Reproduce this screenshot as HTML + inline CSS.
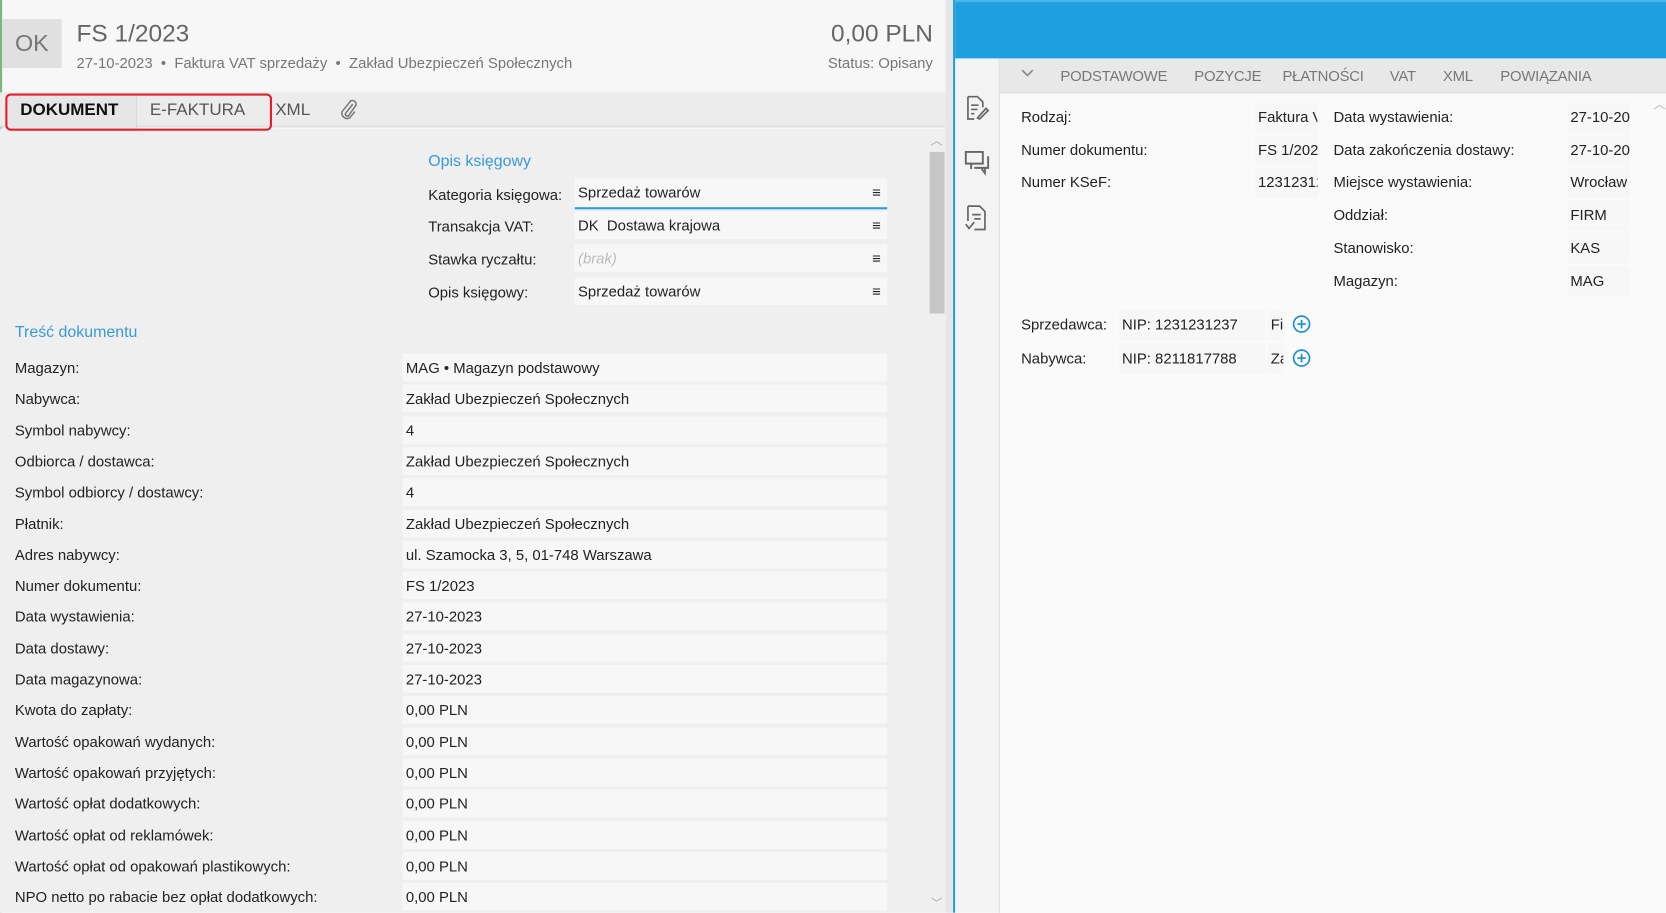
<!DOCTYPE html>
<html><head><meta charset="utf-8"><style>
*{box-sizing:border-box;margin:0;padding:0}
html,body{width:1666px;height:912px;overflow:hidden;background:#fafafa;font-family:"Liberation Sans",sans-serif}
#s{position:absolute;left:0;top:0;width:1568px;height:859px;transform:scale(1.0625);transform-origin:0 0}
.a{position:absolute;white-space:nowrap}
.lbl{font-size:14px;color:#222}
.fld{position:absolute;background:#f7f7f7;font-size:14px;color:#222;padding-left:3px;line-height:26px;height:26px;overflow:hidden;white-space:nowrap}
.ham{position:absolute;right:6px;top:0;font-size:14px}
.tab{position:absolute;top:63px;font-size:14px;color:#777;letter-spacing:-.2px}
</style></head><body><div id="s">
<div class="a" style="left:0;top:0;width:890px;height:87px;background:#f7f7f7"></div>
<div class="a" style="left:0;top:0;width:2px;height:859px;background:#7cb87c"></div>
<div class="a" style="left:2px;top:18px;width:56px;height:46px;background:#e0e0e0;color:#777;font-size:22px;line-height:46px;text-align:center">OK</div>
<div class="a" style="left:72px;top:18px;font-size:23px;color:#666">FS 1/2023</div>
<div class="a" style="left:72px;top:51px;font-size:14px;color:#777">27-10-2023 &nbsp;•&nbsp; Faktura VAT sprzedaży &nbsp;•&nbsp; Zakład Ubezpieczeń Społecznych</div>
<div class="a" style="right:690px;top:18px;font-size:23px;color:#666">0,00 PLN</div>
<div class="a" style="right:690px;top:51px;font-size:14px;color:#777">Status: Opisany</div>
<div class="a" style="left:0;top:87px;width:890px;height:33px;background:#ececec;border-bottom:2px solid #e0e0e0"></div>
<div class="a" style="left:0;top:121px;width:890px;height:738px;background:#efefef"></div>
<div class="a" style="left:7px;top:90px;width:122px;height:31px;background:#e6e6e6;border-right:1px solid #d8d8d8"></div>
<div class="a" style="left:19px;top:95px;font-size:16px;font-weight:bold;color:#111">DOKUMENT</div>
<div class="a" style="left:141px;top:95px;font-size:16px;color:#555">E-FAKTURA</div>
<div class="a" style="left:5px;top:88px;width:251px;height:35px;border:2px solid #e3202a;border-radius:5px"></div>
<div class="a" style="left:259px;top:95px;font-size:16px;color:#555">XML</div>
<svg class="a" style="left:318px;top:92px" width="20" height="22" viewBox="0 0 20 22"><path d="M14 6 L7 15 a2 2 0 0 0 3 2 L17 7 a3.5 3.5 0 0 0 -5 -4 L4 13 a5 5 0 0 0 7 6 L16 13" fill="none" stroke="#777" stroke-width="1.4"/></svg>
<div class="a" style="left:875px;top:143px;width:14px;height:152px;background:#c6c6c6"></div>
<div class="a" style="left:876px;top:124px;font-size:11px;color:#aaa">︿</div>
<div class="a" style="left:876px;top:842px;font-size:11px;color:#aaa">﹀</div>
<div class="a" style="left:890px;top:0;width:7px;height:859px;background:#e6e6e6"></div>
<div class="a" style="left:897px;top:0;width:2px;height:859px;background:#1ea0e0"></div>

<div class="a" style="left:403px;top:143px;font-size:15px;color:#3a9ad9">Opis księgowy</div>
<div class="a lbl" style="left:403px;top:175px">Kategoria księgowa:</div>
<div class="fld" style="left:541px;top:168px;width:294px;height:29px;border-bottom:2px solid #2a9ee0">Sprzedaż towarów<span class="ham">≡</span></div>
<div class="a lbl" style="left:403px;top:205px">Transakcja VAT:</div>
<div class="fld" style="left:541px;top:199px;width:294px">DK &nbsp;Dostawa krajowa<span class="ham">≡</span></div>
<div class="a lbl" style="left:403px;top:236px">Stawka ryczałtu:</div>
<div class="fld" style="left:541px;top:230px;width:294px;color:#bbb;font-style:italic">(brak)<span class="ham" style="color:#222;font-style:normal">≡</span></div>
<div class="a lbl" style="left:403px;top:267px">Opis księgowy:</div>
<div class="fld" style="left:541px;top:261px;width:294px">Sprzedaż towarów<span class="ham">≡</span></div>

<div class="a" style="left:14px;top:304px;font-size:15px;color:#3a9ad9">Treść dokumentu</div>
<div id="rows"></div>

<div class="a" style="left:899px;top:0;width:669px;height:55px;background:#1ea0e0;border-top:2px solid #4db4ea"></div>
<div class="a" style="left:899px;top:55px;width:42px;height:804px;background:#f3f3f3;border-right:1px solid #dcdcdc"></div>
<div class="a" style="left:941px;top:55px;width:627px;height:33px;background:#e8e8e8;border-bottom:1px solid #ddd"></div>
<svg class="a" style="left:960px;top:64px" width="14" height="10"><path d="M2 2 L7 7 L12 2" fill="none" stroke="#888" stroke-width="1.5"/></svg>
<div class="tab" style="left:998px">PODSTAWOWE</div>
<div class="tab" style="left:1124px">POZYCJE</div>
<div class="tab" style="left:1207px">PŁATNOŚCI</div>
<div class="tab" style="left:1308px">VAT</div>
<div class="tab" style="left:1358px">XML</div>
<div class="tab" style="left:1412px">POWIĄZANIA</div>
<svg class="a" style="left:908px;top:89px" width="24" height="26"><path d="M3 2 H12 L17 7 V12 M3 2 V23 H9 M6 10 H13 M6 14 H12 M6 18 H9 M12 22 L20 13 L22 15 L14 23 Z" fill="none" stroke="#666" stroke-width="1.6"/></svg>
<svg class="a" style="left:907px;top:140px" width="26" height="26"><path d="M2 3 H18 V14 H2 Z M7 14 V19 M10 18 H23 V7 M20 18 V23 L17 19" fill="none" stroke="#666" stroke-width="1.8"/></svg>
<svg class="a" style="left:907px;top:192px" width="24" height="27"><path d="M4 2 H15 L20 7 V24 H10 M4 2 V16 M8 10 H16 M10 14 H16 M2 19 L5 23 L10 17" fill="none" stroke="#666" stroke-width="1.6"/></svg>
<div class="a" style="left:1556px;top:89px;font-size:12px;color:#bbb">︿</div>
<div id="rr"></div>
</div>
<script>
var L=[["Magazyn:","MAG • Magazyn podstawowy"],["Nabywca:","Zakład Ubezpieczeń Społecznych"],["Symbol nabywcy:","4"],["Odbiorca / dostawca:","Zakład Ubezpieczeń Społecznych"],["Symbol odbiorcy / dostawcy:","4"],["Płatnik:","Zakład Ubezpieczeń Społecznych"],["Adres nabywcy:","ul. Szamocka 3, 5, 01-748 Warszawa"],["Numer dokumentu:","FS 1/2023"],["Data wystawienia:","27-10-2023"],["Data dostawy:","27-10-2023"],["Data magazynowa:","27-10-2023"],["Kwota do zapłaty:","0,00 PLN"],["Wartość opakowań wydanych:","0,00 PLN"],["Wartość opakowań przyjętych:","0,00 PLN"],["Wartość opłat dodatkowych:","0,00 PLN"],["Wartość opłat od reklamówek:","0,00 PLN"],["Wartość opłat od opakowań plastikowych:","0,00 PLN"],["NPO netto po rabacie bez opłat dodatkowych:","0,00 PLN"]];
var h="";L.forEach(function(r,i){var y=333+i*29.3;h+='<div class="a lbl" style="left:14px;top:'+(y+5)+'px">'+r[0]+'</div><div class="fld" style="left:379px;top:'+y+'px;width:456px">'+r[1]+'</div>';});
document.getElementById("rows").outerHTML=h;
var R=[[961,"Rodzaj:",1181,"Faktura VAT",110],[961,"Numer dokumentu:",1181,"FS 1/2023",141],[961,"Numer KSeF:",1181,"1231231237",171],[1255,"Data wystawienia:",1475,"27-10-2023",110],[1255,"Data zakończenia dostawy:",1475,"27-10-2023",141],[1255,"Miejsce wystawienia:",1475,"Wrocław",171],[1255,"Oddział:",1475,"FIRM",202],[1255,"Stanowisko:",1475,"KAS",233],[1255,"Magazyn:",1475,"MAG",264]];
h="";R.forEach(function(r){h+='<div class="a lbl" style="left:'+r[0]+'px;top:'+(r[4]-8)+'px">'+r[1]+'</div><div class="fld" style="left:'+r[2]+'px;top:'+(r[4]-14)+'px;width:59px;height:29px;line-height:29px">'+r[3]+'</div>';});
[["Sprzedawca:","NIP: 1231231237","Firma",305],["Nabywca:","NIP: 8211817788","Zakład",337]].forEach(function(r){h+='<div class="a lbl" style="left:961px;top:'+(r[3]-8)+'px">'+r[0]+'</div><div class="fld" style="left:1053px;top:'+(r[3]-14)+'px;width:138px;height:29px;line-height:29px">'+r[1]+'</div><div class="fld" style="left:1193px;top:'+(r[3]-14)+'px;width:15px;height:29px;line-height:29px">'+r[2]+'</div><svg class="a" style="left:1216px;top:'+(r[3]-9)+'px" width="18" height="18"><circle cx="9" cy="9" r="7.5" fill="none" stroke="#1e8fd0" stroke-width="1.6"/><path d="M9 5V13M5 9H13" stroke="#1e8fd0" stroke-width="1.6"/></svg>';});
document.getElementById("rr").outerHTML=h;
</script>
</body></html>
